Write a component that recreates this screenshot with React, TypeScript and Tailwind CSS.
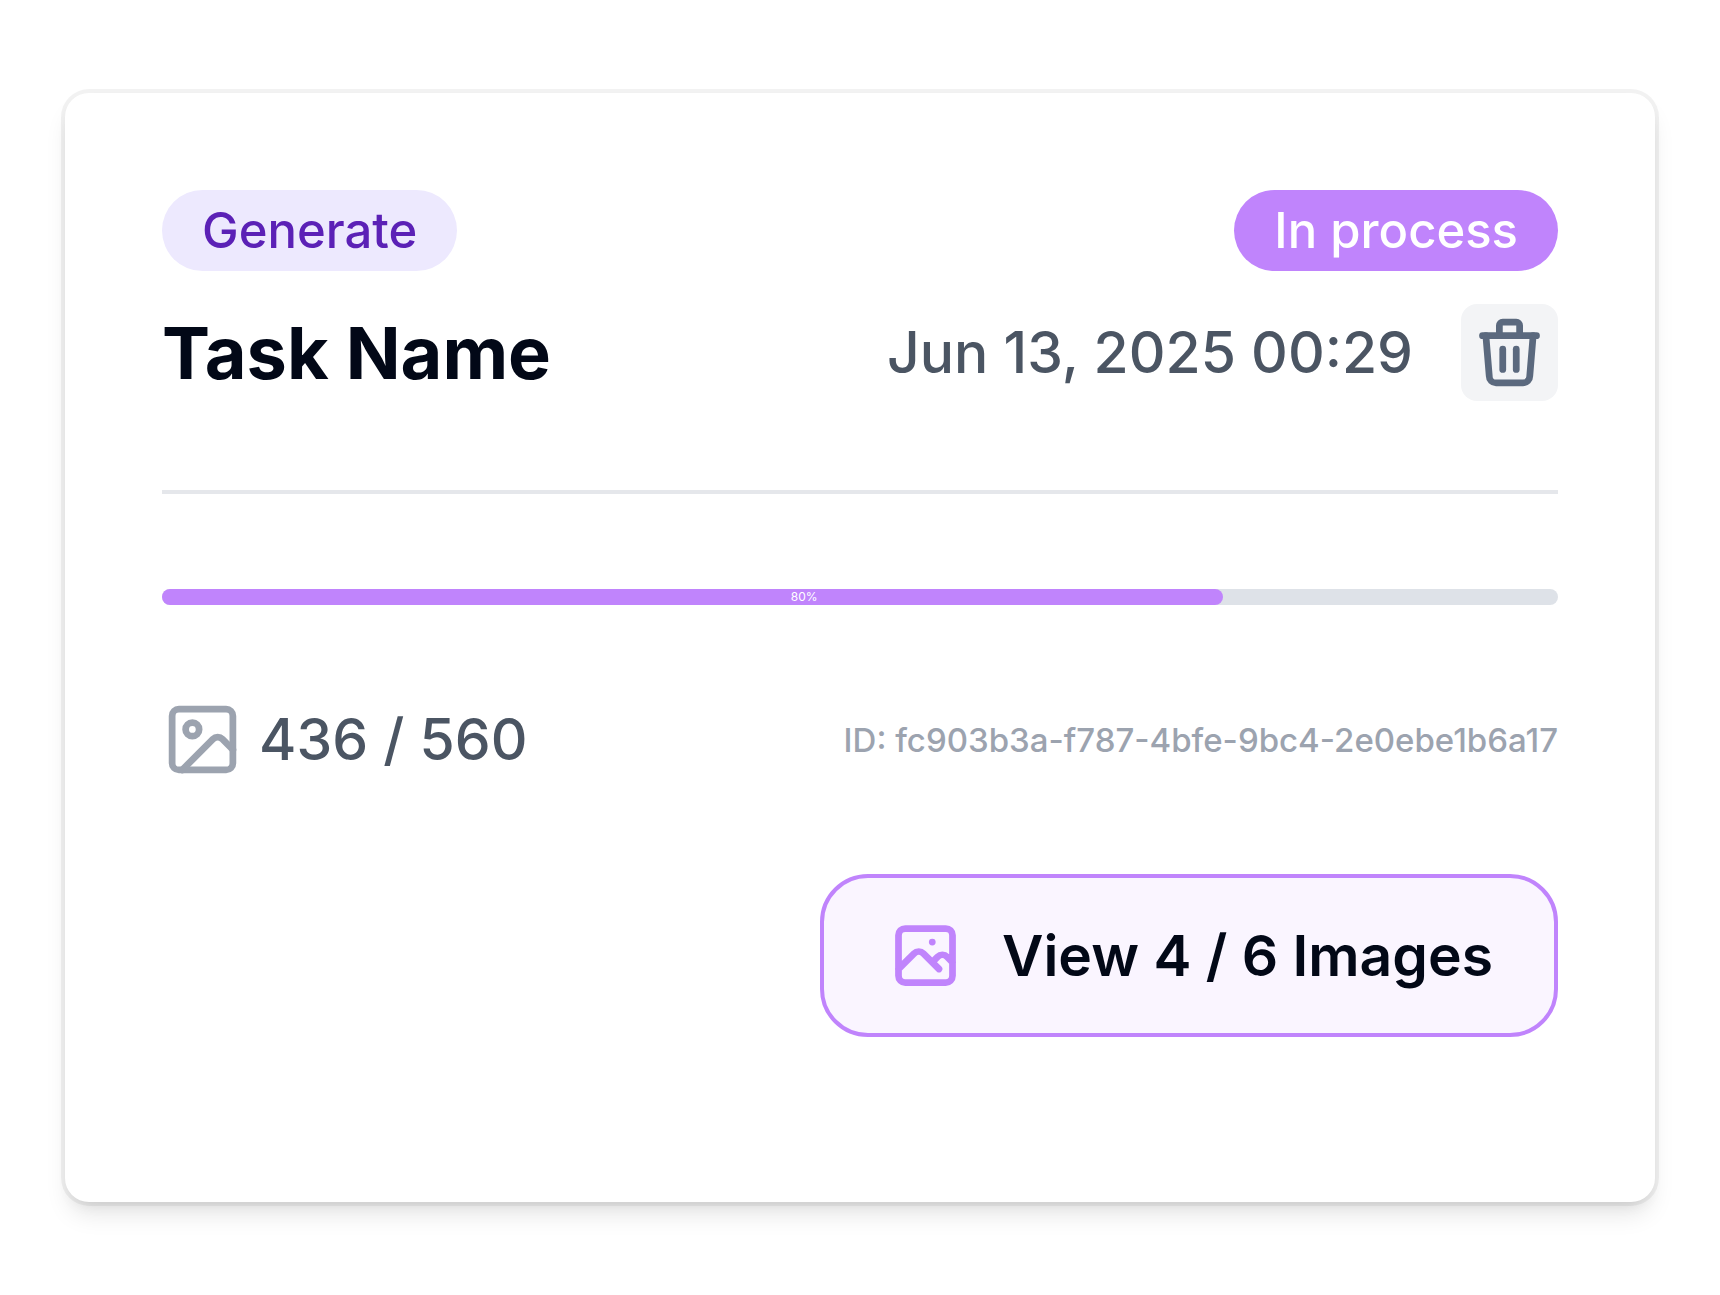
import { Image } from "lucide-react";
import { TbTrash } from "react-icons/tb";

const task = {
  type: "Generate",
  status: "In process",
  name: "Task Name",
  createdAt: "Jun 13, 2025 00:29",
  progress: 76,
  progressLabel: "80%",
  count: "436 / 560",
  id: "fc903b3a-f787-4bfe-9bc4-2e0ebe1b6a17",
};

const PhotoIcon = () => {
  return (
    <svg
      className="size-[81px] shrink-0 text-[#c084fc]"
      viewBox="0 0 24 24"
      fill="none"
      stroke="currentColor"
      strokeWidth={2}
      strokeLinecap="round"
      strokeLinejoin="round"
      aria-hidden="true"
    >
      <path d="M4 16l4.586-4.586a2 2 0 012.828 0L16 16m-2-2l1.586-1.586a2 2 0 012.828 0L20 14m-6-6h.01M6 20h12a2 2 0 002-2V6a2 2 0 00-2-2H6a2 2 0 00-2 2v12a2 2 0 002 2z" />
    </svg>
  );
};

const TaskCard = () => {
  return (
    <article className="rounded-3xl bg-white px-[97px] pt-[97px] pb-[165px] shadow-[0_0_0_4px_rgba(0,0,0,0.05),0_16px_24px_-4px_rgba(0,0,0,0.1),0_8px_16px_-8px_rgba(0,0,0,0.1)]">
      <div className="flex items-center justify-between">
        <span className="rounded-full bg-[#ede9fe] px-10 text-[49px] leading-[81px] font-medium text-[#5b21b6]">
          {task.type}
        </span>
        <span className="rounded-full bg-[#c084fc] px-10 text-[49px] leading-[81px] font-medium text-white">
          {task.status}
        </span>
      </div>

      <div className="mt-[33px] flex items-center justify-between">
        <h2 className="text-[72px] leading-[97px] font-bold text-[#020817]">{task.name}</h2>
        <div className="flex items-center gap-12">
          <time className="text-[57px] leading-[81px] font-medium text-[#4b5563]">{task.createdAt}</time>
          <button
            type="button"
            aria-label="Delete task"
            className="flex size-[97px] items-center justify-center rounded-2xl bg-[#f3f4f6]"
          >
            <TbTrash className="size-[81px] text-[#5b697e]" />
          </button>
        </div>
      </div>

      <hr className="mt-[89px] border-t-4 border-[#e5e7eb]" />

      <div
        role="progressbar"
        aria-label="Task progress"
        aria-valuenow={task.progress}
        className="relative mt-[95px] h-4 rounded-full bg-[#dee2e8]"
      >
        <div className="h-full rounded-full bg-[#c084fc]" style={{ width: `${task.progress}%` }} />
        <span className="absolute inset-y-0 left-0 w-[92%] text-center text-xs leading-4 text-white">
          {task.progressLabel}
        </span>
      </div>

      <div className="mt-[94px] flex items-center justify-between">
        <div className="flex items-center gap-4">
          <Image className="size-[81px] text-[#9ca3af]" />
          <span className="text-[57px] leading-[81px] font-medium text-[#4b5563]">{task.count}</span>
        </div>
        <span className="text-[33px] leading-[48px] font-medium text-[#9ca3af]">ID: {task.id}</span>
      </div>

      <div className="mt-[94px] flex justify-end">
        <button
          type="button"
          className="flex h-[163px] items-center gap-9 rounded-[48px] border-4 border-[#c084fc] bg-[#faf5ff] px-[61px] text-[57px] leading-[81px] font-semibold text-[#020817]"
        >
          <PhotoIcon />
          View 4 / 6 Images
        </button>
      </div>
    </article>
  );
};

const App = () => {
  return (
    <main className="min-h-screen bg-white px-[65px] py-[93px] font-['Inter',sans-serif]">
      <TaskCard />
    </main>
  );
};

export default App;
